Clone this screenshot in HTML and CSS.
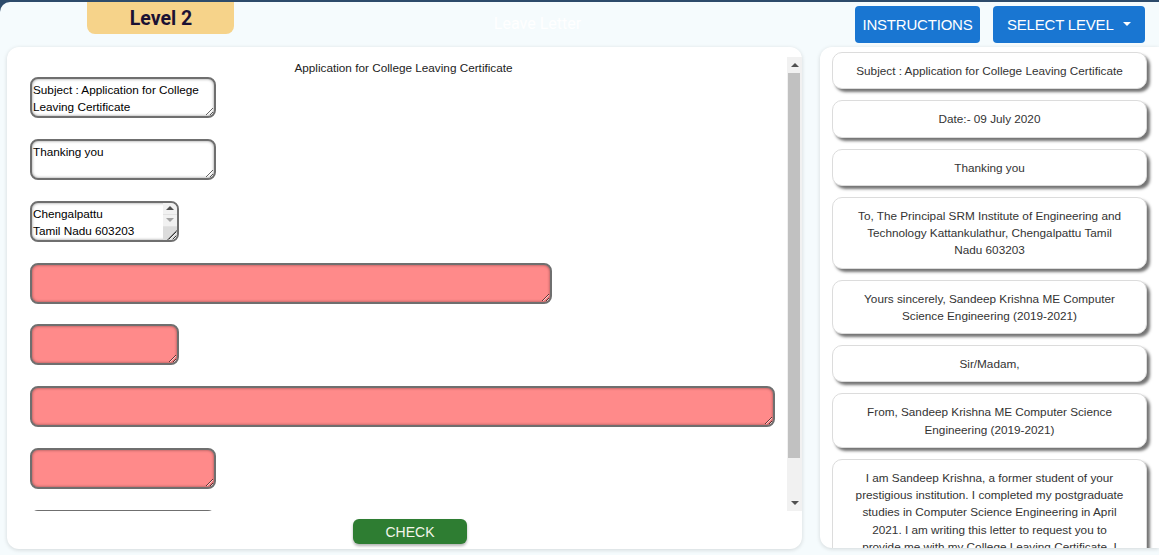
FILE: index.html
```html
<!DOCTYPE html>
<html>
<head>
<meta charset="utf-8">
<title>Leave Letter</title>
<link rel="stylesheet" href="styles.css">
</head>
<body>
<div class="app">
  <header class="topbar">
    <div class="badge">Level 2</div>
    <div class="title">Leave Letter</div>
    <div class="actions">
      <button class="btn btn-instr">INSTRUCTIONS</button>
      <button class="btn btn-select">SELECT LEVEL<span class="caret"></span></button>
    </div>
  </header>
  <main class="main">
    <section class="left-panel">
      <div class="scroll-wrap">
        <div class="scroll">
          <div class="sheet-title">Application for College Leaving Certificate</div>
          <textarea class="field w-md">Subject : Application for College Leaving Certificate</textarea>
          <textarea class="field w-md">Thanking you</textarea>
          <div class="field field-box w-sm">
            <textarea class="field-input">Chengalpattu
Tamil Nadu 603203
India</textarea>
            <div class="mini-sb">
              <div class="mini-btn"><span class="tri tri-up"></span></div>
              <div class="mini-btn"><span class="tri tri-down light"></span></div>
              <div class="mini-corner"></div>
            </div>
          </div>
          <textarea class="field w-lg wrong"></textarea>
          <textarea class="field w-sm wrong"></textarea>
          <textarea class="field w-xl wrong"></textarea>
          <textarea class="field w-md wrong"></textarea>
          <textarea class="field w-md last"></textarea>
        </div>
        <div class="vscroll">
          <div class="sb-btn"><span class="tri tri-up"></span></div>
          <div class="sb-track"><div class="sb-thumb"></div></div>
          <div class="sb-btn"><span class="tri tri-down"></span></div>
        </div>
      </div>
      <div class="footer">
        <button class="check">CHECK</button>
      </div>
    </section>
    <aside class="right-panel">
      <div class="card">Subject : Application for College Leaving Certificate</div>
      <div class="card">Date:- 09 July 2020</div>
      <div class="card">Thanking you</div>
      <div class="card">To, The Principal SRM Institute of Engineering and Technology Kattankulathur, Chengalpattu Tamil Nadu 603203</div>
      <div class="card">Yours sincerely, Sandeep Krishna ME Computer Science Engineering (2019-2021)</div>
      <div class="card">Sir/Madam,</div>
      <div class="card">From, Sandeep Krishna ME Computer Science Engineering (2019-2021)</div>
      <div class="card">I am Sandeep Krishna, a former student of your prestigious institution. I completed my postgraduate studies in Computer Science Engineering in April 2021. I am writing this letter to request you to provide me with my College Leaving Certificate. I need it for my further studies. Kindly do the needful at the earliest.</div>
    </aside>
  </main>
</div>
</body>
</html>
```
FILE: styles.css
```css
* { box-sizing: border-box; }
html, body { margin: 0; padding: 0; }
body {
  background: #2d4b6b;
  font-family: "Liberation Sans", Arial, sans-serif;
  overflow: hidden;
  height: 555px;
}
.app {
  margin-top: 2px;
  height: 553px;
  background: #f5fbfd;
  border-top-left-radius: 10px;
  display: flex;
  flex-direction: column;
}
.topbar {
  height: 45px;
  display: flex;
  align-items: flex-start;
  flex: none;
}
.badge {
  margin-left: 87px;
  width: 147px;
  height: 32px;
  background: #f6d38a;
  border-radius: 0 0 8px 8px;
  color: #1b1133;
  font-family: Roboto, "Liberation Sans", sans-serif;
  font-weight: 700;
  font-size: 19.5px;
  display: flex;
  align-items: center;
  justify-content: center;
  padding-left: 1px;
}
.title {
  flex: 1;
  text-align: center;
  color: #ffffff;
  font-size: 16px;
  font-family: Roboto, "Liberation Sans", sans-serif;
  padding-top: 12px;
  padding-right: 14px;
}
.actions {
  display: flex;
  gap: 13px;
  margin-top: 4px;
  margin-right: 14px;
}
.btn {
  height: 37px;
  border: none;
  border-radius: 4px;
  background: #1976d2;
  color: #ffffff;
  font-family: "Liberation Sans", Arial, sans-serif;
  font-size: 15px;
  letter-spacing: -0.2px;
  display: flex;
  align-items: center;
  cursor: pointer;
}
.btn-instr { width: 125px; padding: 0 8px; justify-content: center; }
.btn-select { width: 152px; padding: 0 14px; justify-content: space-between; }
.caret {
  width: 0; height: 0;
  border-left: 4px solid transparent;
  border-right: 4px solid transparent;
  border-top: 4px solid #ffffff;
  margin-top: -2px;
}
.main {
  flex: 1;
  display: flex;
  gap: 18px;
  padding-left: 7px;
  padding-bottom: 6px;
  min-height: 0;
}
.left-panel {
  width: 795px;
  background: #ffffff;
  border-radius: 12px;
  box-shadow: 0 1px 4px rgba(0, 0, 0, 0.14);
  padding-top: 10px;
  display: flex;
  flex-direction: column;
}
.scroll-wrap {
  height: 454px;
  display: flex;
}
.scroll {
  flex: 1;
  overflow: hidden;
  padding: 4px 10px 0 23px;
}
.vscroll {
  width: 15px;
  background: #f1f1f1;
  display: flex;
  flex-direction: column;
}
.sb-btn {
  height: 16px;
  display: flex;
  align-items: center;
  justify-content: center;
  flex: none;
}
.sb-track {
  flex: 1;
  padding: 0 2px 0 1px;
}
.sb-thumb {
  height: 385px;
  background: #c1c1c1;
}
.tri {
  width: 0; height: 0;
  border-left: 4px solid transparent;
  border-right: 4px solid transparent;
}
.tri-up { border-bottom: 4px solid #505050; }
.tri-down { border-top: 4px solid #505050; }
.tri-down.light { border-top-color: #a3a3a3; }
.sheet-title {
  text-align: center;
  font-size: 11.75px;
  line-height: 14px;
  color: #222;
  margin-bottom: 2px;
}
.field {
  display: block;
  height: 41px;
  margin: 0 0 20.85px 0;
  border: 2px solid #6f6f6f;
  border-radius: 8px;
  box-shadow: inset 0 0 3px rgba(0, 0, 0, 0.45);
  background: #ffffff;
  font-family: "Liberation Sans", Arial, sans-serif;
  font-size: 11.75px;
  line-height: 17px;
  color: #000;
  padding: 2px 1px 1px 1px;
  resize: both;
  outline: none;
}
.field-box {
  display: flex;
  padding: 0;
  overflow: hidden;
}
.field-input {
  flex: 1;
  min-width: 0;
  border: none;
  background: transparent;
  resize: none;
  outline: none;
  overflow: hidden;
  font-family: "Liberation Sans", Arial, sans-serif;
  font-size: 11.75px;
  line-height: 17px;
  color: #000;
  padding: 2px 1px 0 1px;
  margin: 0;
}
.mini-sb {
  width: 14px;
  display: flex;
  flex-direction: column;
  background: #f1f1f1;
}
.mini-btn {
  height: 12px;
  display: flex;
  align-items: center;
  justify-content: center;
  border-bottom: 1px solid #e2e2e2;
}
.mini-corner {
  flex: 1;
  background:
    linear-gradient(135deg, transparent 62%, #8a8a8a 62%, #8a8a8a 68%, transparent 68%, transparent 78%, #8a8a8a 78%, #8a8a8a 84%, transparent 84%),
    #dcdcdc;
}
.field.last { margin-bottom: 0; }
.wrong { background: #ff8a8a; }
.w-sm { width: 149px; }
.w-md { width: 186px; }
.w-lg { width: 522px; }
.w-xl { width: 745px; }
.footer {
  display: flex;
  justify-content: center;
  padding-top: 8px;
  padding-left: 11px;
}
.check {
  width: 114px;
  height: 25px;
  border: none;
  border-radius: 6px;
  background: #2e7d32;
  color: #f4f6ea;
  font-family: "Liberation Sans", Arial, sans-serif;
  font-size: 14px;
  box-shadow: 0 2px 3px rgba(0, 0, 0, 0.3);
  cursor: pointer;
}
.right-panel {
  flex: 1;
  background: #ffffff;
  border-radius: 12px 0 0 12px;
  box-shadow: 0 1px 4px rgba(0, 0, 0, 0.14);
  padding: 5px 12px 0 12px;
  overflow: hidden;
  height: 501px;
}
.card {
  width: 315px;
  border: 1px solid #dcdcdc;
  border-radius: 10px;
  box-shadow: 3px 3px 3px rgba(0, 0, 0, 0.55);
  padding: 9px 20px;
  margin-bottom: 11px;
  text-align: center;
  font-size: 11.75px;
  line-height: 17.25px;
  color: #333;
  background: #fff;
}
```
